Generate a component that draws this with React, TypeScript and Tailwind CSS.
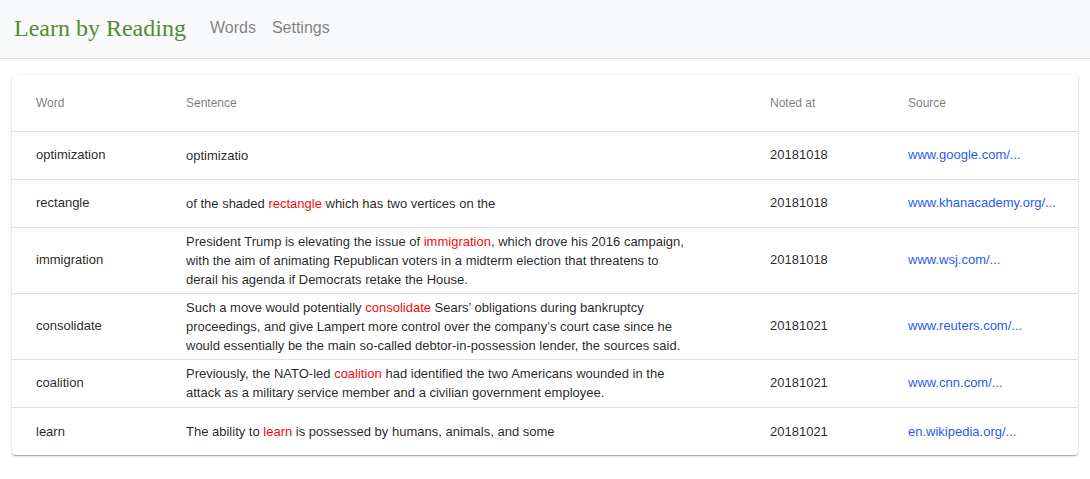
import React from "react";

type Row = { word: string; pre: string; post: string; date: string; source: string };

const rows: Row[] = [
  { word: "optimization", pre: "optimizatio", post: "", date: "20181018", source: "www.google.com/..." },
  { word: "rectangle", pre: "of the shaded ", post: " which has two vertices on the", date: "20181018", source: "www.khanacademy.org/..." },
  {
    word: "immigration",
    pre: "President Trump is elevating the issue of ",
    post: ", which drove his 2016 campaign, with the aim of animating Republican voters in a midterm election that threatens to derail his agenda if Democrats retake the House.",
    date: "20181018",
    source: "www.wsj.com/...",
  },
  {
    word: "consolidate",
    pre: "Such a move would potentially ",
    post: " Sears\u2019 obligations during bankruptcy proceedings, and give Lampert more control over the company\u2019s court case since he would essentially be the main so-called debtor-in-possession lender, the sources said.",
    date: "20181021",
    source: "www.reuters.com/...",
  },
  {
    word: "coalition",
    pre: "Previously, the NATO-led ",
    post: " had identified the two Americans wounded in the attack as a military service member and a civilian government employee.",
    date: "20181021",
    source: "www.cnn.com/...",
  },
  { word: "learn", pre: "The ability to ", post: " is possessed by humans, animals, and some", date: "20181021", source: "en.wikipedia.org/..." },
];

export default function App() {
  return (
    <div className="min-h-[479px] bg-white font-['Liberation_Sans',Arial,sans-serif]">
      <nav className="flex h-[59px] items-center border-b border-[#dedfe0] bg-[#f8f9fa] px-[14px]">
        <span className="font-['Liberation_Serif','Times_New_Roman',serif] text-[24px] leading-none text-[#558b2f] pb-[3px]">
          Learn by Reading
        </span>
        <div className="ml-[24px] flex gap-[16px] text-[16px] text-[rgba(0,0,0,0.5)] pb-[3px]">
          <span>Words</span>
          <span>Settings</span>
        </div>
      </nav>
      <div className="px-[12px] pt-[16px]">
        <div className="overflow-hidden rounded-[4px] bg-white shadow-[0_1px_3px_0_rgba(0,0,0,0.2),0_1px_1px_0_rgba(0,0,0,0.14),0_2px_1px_-1px_rgba(0,0,0,0.12)]">
          <table className="w-full table-fixed border-collapse text-[13px] text-[rgba(0,0,0,0.87)]">
            <colgroup>
              <col className="w-[150px]" />
              <col className="w-[584px]" />
              <col className="w-[138px]" />
              <col />
            </colgroup>
            <thead>
              <tr className="h-[56px] border-b border-[#e0e0e0] text-left text-[12px] font-normal text-[rgba(0,0,0,0.54)]">
                <th className="pl-[24px] pr-[56px] font-normal">Word</th>
                <th className="pl-[24px] pr-[56px] font-normal">Sentence</th>
                <th className="pl-[24px] pr-[56px] font-normal">Noted at</th>
                <th className="pl-[24px] pr-[24px] font-normal">Source</th>
              </tr>
            </thead>
            <tbody>
              {rows.map((r, i) => (
                <tr
                  key={r.word}
                  className={`h-[48px] ${i < rows.length - 1 ? "border-b border-[#e0e0e0]" : ""}`}
                >
                  <td className="py-[4px] pl-[24px] pr-[56px] align-middle">{r.word}</td>
                  <td className="py-[4px] pl-[24px] pr-[56px] align-middle leading-[19px]">
                    {r.pre}
                    <span className="text-[#f20d0d]">{r.word === "optimization" ? "" : r.word}</span>
                    {r.post}
                  </td>
                  <td className="py-[4px] pl-[24px] pr-[56px] align-middle">{r.date}</td>
                  <td className="py-[4px] pl-[24px] pr-[24px] align-middle text-[#2a5bf0] whitespace-nowrap">
                    {r.source}
                  </td>
                </tr>
              ))}
            </tbody>
          </table>
        </div>
      </div>
    </div>
  );
}
